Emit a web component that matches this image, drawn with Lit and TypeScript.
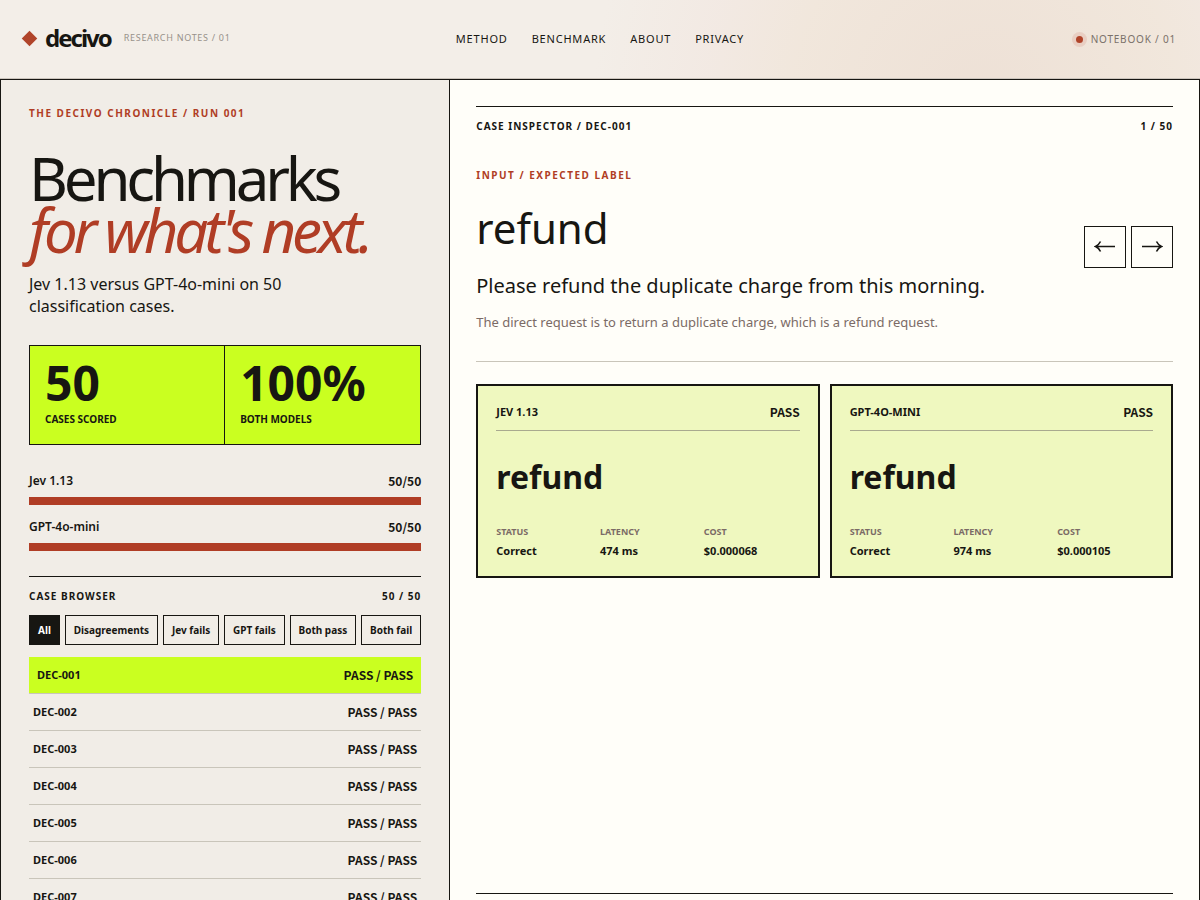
import { LitElement, html, css } from "lit";
import { customElement, state } from "lit/decorators.js";
import { classMap } from "lit/directives/class-map.js";

const CASES = Array.from({ length: 50 }, (_, i) => `DEC-${String(i + 1).padStart(3, "0")}`);
const FILTERS = ["All", "Disagreements", "Jev fails", "GPT fails", "Both pass", "Both fail"];
const SCORES = [
  { name: "Jev 1.13", passed: 50, total: 50 },
  { name: "GPT-4o-mini", passed: 50, total: 50 },
];
const RESULTS = [
  { name: "Jev 1.13", label: "refund", status: "Correct", latency: "474 ms", cost: "$0.000068" },
  { name: "GPT-4o-mini", label: "refund", status: "Correct", latency: "974 ms", cost: "$0.000105" },
];

@customElement("app-root")
export class AppRoot extends LitElement {
  @state() private selected = 0;
  @state() private filter = "All";

  static styles = css`
    :host {
      --ink: #171612;
      --red: #b03d25;
      --lime: #caff20;
      --muted: #7b6b66;
      --rule: #c9c5ba;
      display: flex;
      flex-direction: column;
      height: 100vh;
      overflow: hidden;
      color: var(--ink);
      background: #f3eee8;
      font-family: "Noto Sans", sans-serif;
      font-size: 11px;
      line-height: 16px;
    }
    * { box-sizing: border-box; }
    h1, h2, h3, p, dl, dd, ul { margin: 0; padding: 0; }
    a { color: inherit; text-decoration: none; }
    button { font: inherit; color: inherit; background: none; cursor: pointer; margin: 0; }
    .top {
      display: grid;
      grid-template-columns: 1fr auto 1fr;
      align-items: center;
      height: 79px;
      flex: none;
      padding: 0 24px;
      border-bottom: 1px solid #cbc4bc;
      background:
        radial-gradient(circle at 82% 100px, rgba(226, 196, 176, 0.32), rgba(235, 210, 185, 0.26) 190px, rgba(240, 215, 208, 0.2) 280px, transparent 390px),
        #f3eee8;
    }
    .brand { display: flex; align-items: center; gap: 13px; padding-bottom: 2px; }
    .logo { display: flex; align-items: center; gap: 10px; font-size: 24px; line-height: 32px; font-weight: 700; letter-spacing: -2px; }
    .mark { width: 11px; height: 11px; background: #b0442a; transform: rotate(45deg); }
    .tag { color: #97918a; font-size: 9px; letter-spacing: 0.7px; }
    .nav { display: flex; gap: 24px; letter-spacing: 0.8px; }
    .edition { display: flex; align-items: center; justify-content: flex-end; gap: 8px; color: #7a716a; font-size: 10px; letter-spacing: 0.8px; }
    .dot { width: 7px; height: 7px; border-radius: 50%; background: #b0442a; box-shadow: 0 0 0 4px #e9cfc3; }
    .board {
      display: grid;
      grid-template-columns: minmax(0, 3fr) minmax(0, 5fr);
      flex: 1;
      min-height: 0;
      border: 1px solid var(--ink);
      border-bottom: 0;
    }
    .side {
      display: flex;
      flex-direction: column;
      min-height: 0;
      padding: 25px 28px 0;
      background: #f1ede7;
      border-right: 1px solid var(--ink);
    }
    .eyebrow { color: var(--red); font-size: 10px; font-weight: 700; letter-spacing: 1.5px; }
    h1 { margin-top: 31px; font-size: 60px; line-height: 52px; font-weight: 400; letter-spacing: -0.07em; white-space: nowrap; }
    h1 em { display: block; color: var(--red); }
    .lede { max-width: 300px; margin-top: 17px; font-size: 16px; line-height: 22px; }
    .stats { display: grid; grid-template-columns: 1fr 1fr; margin-top: 28px; border: 1px solid var(--ink); background: var(--lime); }
    .stat { padding: 13px 15px 17px; font-size: 10px; font-weight: 700; text-transform: uppercase; }
    .stat:first-child { border-right: 1px solid var(--ink); }
    .stat strong { display: block; font-size: 48px; line-height: 48px; font-weight: 700; margin-bottom: 4px; }
    .scores { display: grid; gap: 14px; margin-top: 28px; }
    .score { display: grid; gap: 8px; font-size: 12px; font-weight: 600; }
    .pair { display: flex; justify-content: space-between; align-items: center; }
    .mono { font-family: "Noto Sans CJK SC", sans-serif; font-weight: 700; font-size: 12px; }
    .track { height: 8px; background: #ddd6cc; }
    .fill { height: 100%; background: var(--red); }
    .browser { margin-top: 25px; padding-top: 11px; border-top: 1px solid var(--ink); font-size: 10px; font-weight: 700; letter-spacing: 1px; }
    .filters { display: flex; justify-content: space-between; margin-top: 11px; }
    .filter { height: 30px; padding: 0 8px; border: 1px solid var(--ink); font-size: 10px; font-weight: 700; white-space: nowrap; }
    .filter.on { background: var(--ink); color: #fff; }
    .cases { flex: 1; min-height: 0; margin-top: 12px; overflow-y: auto; scrollbar-width: none; list-style: none; }
    .case {
      display: flex; justify-content: space-between; align-items: center;
      width: 100%; height: 37px; padding: 0 4px; border: 0; border-bottom: 1px solid var(--rule);
      font-weight: 700; text-align: left;
    }
    .case.on { background: var(--lime); padding: 0 8px; }
    .main { display: flex; flex-direction: column; min-height: 0; padding: 26px 26px 0; background: #fffef9; }
    .bar { padding-top: 11px; border-top: 1px solid var(--ink); font-size: 10px; font-weight: 700; letter-spacing: 1px; }
    .prompt { margin-top: 33px; padding-bottom: 29px; border-bottom: 1px solid var(--rule); }
    .expected { display: flex; justify-content: space-between; align-items: flex-end; }
    .prompt h2 { margin: 19px 0 14px; font-size: 42px; line-height: 52px; font-weight: 400; }
    .text { margin-top: 4px; font-size: 20px; line-height: 28px; }
    .why { margin-top: 12px; color: var(--muted); font-size: 13px; line-height: 20px; }
    .steps { display: flex; gap: 5px; }
    .step { display: grid; place-items: center; width: 42px; height: 42px; padding: 0; border: 1px solid var(--ink); }
    .results { display: grid; grid-template-columns: 1fr 1fr; gap: 10px; margin-top: 22px; }
    .card { padding: 18px 18px 17px; border: 2px solid var(--ink); background: #eff8bf; }
    .head { padding-bottom: 10px; border-bottom: 1px solid #a9aa8f; font-weight: 700; text-transform: uppercase; }
    .card h3 { margin-top: 23px; font-size: 32px; line-height: 46px; font-weight: 700; }
    .facts { display: grid; grid-template-columns: repeat(3, 1fr); gap: 8px; margin-top: 24px; font-weight: 700; }
    .facts dt { color: var(--muted); font-size: 9px; text-transform: uppercase; }
    .facts dd { margin-top: 3px; }
    .foot { margin-top: auto; padding-top: 6px; border-top: 1px solid var(--ink); }
  `;

  private step(delta: number) {
    this.selected = (this.selected + delta + CASES.length) % CASES.length;
  }

  render() {
    return html`
      <header class="top">
        <div class="brand">
          <a class="logo" href="#"><span class="mark"></span>decivo</a>
          <span class="tag">RESEARCH NOTES / 01</span>
        </div>
        <nav class="nav">
          <a href="#method">METHOD</a><a href="#benchmark">BENCHMARK</a><a href="#about">ABOUT</a><a href="#privacy">PRIVACY</a>
        </nav>
        <div class="edition"><span class="dot"></span>NOTEBOOK / 01</div>
      </header>
      <main class="board">
        <section class="side">
          <p class="eyebrow">THE DECIVO CHRONICLE / RUN 001</p>
          <h1>Benchmarks<em>for what's next.</em></h1>
          <p class="lede">Jev 1.13 versus GPT-4o-mini on 50 classification cases.</p>
          <div class="stats">
            <div class="stat"><strong>50</strong>Cases scored</div>
            <div class="stat"><strong>100%</strong>Both models</div>
          </div>
          <div class="scores">
            ${SCORES.map((s) => html`
              <div class="score">
                <div class="pair"><span>${s.name}</span><span class="mono">${s.passed}/${s.total}</span></div>
                <div class="track"><div class="fill" style="width:${(s.passed / s.total) * 100}%"></div></div>
              </div>`)}
          </div>
          <div class="browser pair"><span>CASE BROWSER</span><span>50 / 50</span></div>
          <div class="filters">
            ${FILTERS.map((f) => html`
              <button class=${classMap({ filter: true, on: f === this.filter })} @click=${() => (this.filter = f)}>${f}</button>`)}
          </div>
          <ul class="cases">
            ${CASES.map((id, i) => html`
              <li><button class=${classMap({ case: true, on: i === this.selected })} @click=${() => (this.selected = i)}>
                <span>${id}</span><span class="mono">PASS / PASS</span>
              </button></li>`)}
          </ul>
        </section>
        <section class="main">
          <div class="bar pair"><span>CASE INSPECTOR / ${CASES[this.selected]}</span><span>${this.selected + 1} / 50</span></div>
          <div class="prompt">
            <div class="expected">
              <div>
                <p class="eyebrow">INPUT / EXPECTED LABEL</p>
                <h2>refund</h2>
              </div>
              <div class="steps">
                <button class="step" aria-label="Previous case" @click=${() => this.step(-1)}>
                  <svg width="22" height="14" viewBox="0 0 22 14" fill="none" stroke="currentColor" stroke-width="1.6"><path d="M21 6.500H2M6.500 1.500C5.500 3.500 4 5.500 1.500 6.500c2.500 1 4 3 5 5" /></svg>
                </button>
                <button class="step" aria-label="Next case" @click=${() => this.step(1)}>
                  <svg width="22" height="14" viewBox="0 0 22 14" fill="none" stroke="currentColor" stroke-width="1.6"><path d="M1 6.500h19M15.500 1.500c1 2 2.500 4 5 5-2.500 1-4 3-5 5" /></svg>
                </button>
              </div>
            </div>
            <p class="text">Please refund the duplicate charge from this morning.</p>
            <p class="why">The direct request is to return a duplicate charge, which is a refund request.</p>
          </div>
          <div class="results">
            ${RESULTS.map((r) => html`
              <article class="card">
                <div class="head pair"><span>${r.name}</span><span class="mono">PASS</span></div>
                <h3>${r.label}</h3>
                <dl class="facts">
                  <div><dt>Status</dt><dd>${r.status}</dd></div>
                  <div><dt>Latency</dt><dd>${r.latency}</dd></div>
                  <div><dt>Cost</dt><dd>${r.cost}</dd></div>
                </dl>
              </article>`)}
          </div>
          <footer class="foot"></footer>
        </section>
      </main>
    `;
  }
}
